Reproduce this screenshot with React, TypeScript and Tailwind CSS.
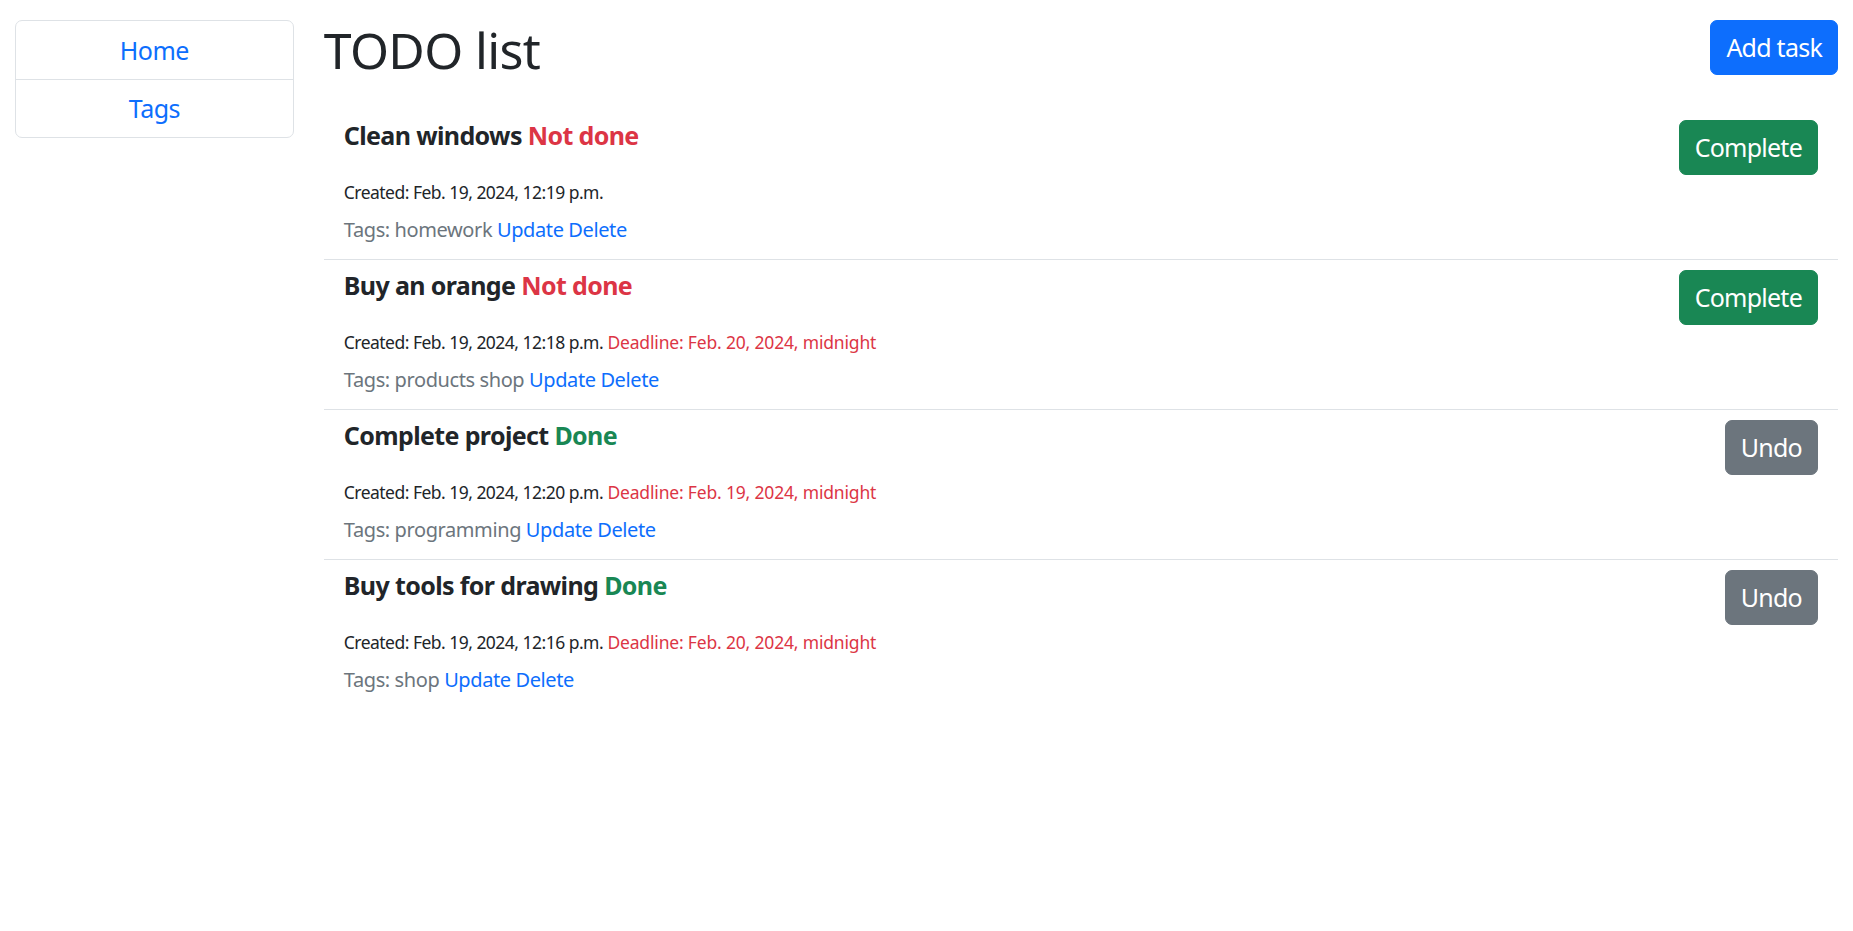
import React from "react";

type Task = {
  title: string;
  done: boolean;
  created: string;
  deadline?: string;
  tags: string;
};

const tasks: Task[] = [
  { title: "Clean windows", done: false, created: "Feb. 19, 2024, 12:19 p.m.", tags: "homework" },
  {
    title: "Buy an orange",
    done: false,
    created: "Feb. 19, 2024, 12:18 p.m.",
    deadline: "Feb. 20, 2024, midnight",
    tags: "products shop",
  },
  {
    title: "Complete project",
    done: true,
    created: "Feb. 19, 2024, 12:20 p.m.",
    deadline: "Feb. 19, 2024, midnight",
    tags: "programming",
  },
  {
    title: "Buy tools for drawing",
    done: true,
    created: "Feb. 19, 2024, 12:16 p.m.",
    deadline: "Feb. 20, 2024, midnight",
    tags: "shop",
  },
];

const TaskRow = ({ task }: { task: Task }) => {
  return (
    <li className="flex items-start justify-between border-b border-[#dee2e6] px-[20px] pt-[10px] pb-[14px] last:border-b-0">
      <div>
        <h5 className="mb-[26.5px] text-[25px] leading-[30px] font-bold tracking-[-0.025em]">
          {task.title}{" "}
          {task.done ? (
            <span className="text-[#198754]">Done</span>
          ) : (
            <span className="text-[#dc3545]">Not done</span>
          )}
        </h5>
        <p className="mb-[8.5px] text-[17.5px] leading-[30px] tracking-[-0.03em]">
          Created: {task.created}
          {task.deadline && (
            <span className="tracking-[-0.01em] text-[#dc3545]"> Deadline: {task.deadline}</span>
          )}
        </p>
        <p className="text-[20px] leading-[30px] tracking-[-0.02em] text-[#6c757d]">
          Tags: {task.tags}{" "}
          <a href="#" className="text-[#0d6efd]">
            Update
          </a>{" "}
          <a href="#" className="text-[#0d6efd]">
            Delete
          </a>
        </p>
      </div>
      {task.done ? (
        <button className="rounded-[7px] border border-[#6c757d] bg-[#6c757d] px-[15px] py-[7.5px] text-[25px] leading-[37.5px] tracking-[-0.03em] text-white">
          Undo
        </button>
      ) : (
        <button className="rounded-[7px] border border-[#198754] bg-[#198754] px-[15px] py-[7.5px] text-[25px] leading-[37.5px] tracking-[-0.03em] text-white">
          Complete
        </button>
      )}
    </li>
  );
};

export default function App() {
  return (
    <div className="flex min-h-screen bg-white font-['Noto_Sans',sans-serif] text-[#212529]">
      <aside className="w-[308.8px] shrink-0 px-[15px] pt-[20px]">
        <div className="overflow-hidden rounded-[7px] border border-[#dee2e6]">
          <a
            href="#"
            className="block border-b border-[#dee2e6] px-[20px] pt-[10.5px] pb-[9.5px] text-center text-[25px] leading-[37.5px] tracking-[-0.02em] text-[#0d6efd]"
          >
            Home
          </a>
          <a
            href="#"
            className="block px-[20px] pt-[10.5px] pb-[9.5px] text-center text-[25px] leading-[37.5px] tracking-[-0.02em] text-[#0d6efd]"
          >
            Tags
          </a>
        </div>
      </aside>
      <main className="flex-1 px-[15px] pt-[20px]">
        <header className="flex items-start justify-between">
          <h1 className="text-[50px] leading-[60px] font-normal tracking-[-0.013em]">TODO list</h1>
          <button className="rounded-[7px] border border-[#0d6efd] bg-[#0d6efd] px-[15px] py-[7.5px] text-[25px] leading-[37.5px] tracking-[-0.03em] text-white">
            Add task
          </button>
        </header>
        <ul className="mt-[30px]">
          {tasks.map((t) => (
            <TaskRow key={t.title} task={t} />
          ))}
        </ul>
      </main>
    </div>
  );
}
